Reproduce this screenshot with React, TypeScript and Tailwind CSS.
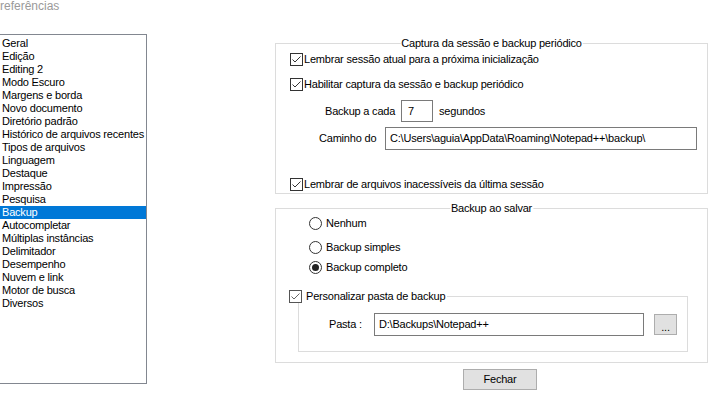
import type { ReactNode } from 'react'

const pages = [
  'Geral',
  'Edição',
  'Editing 2',
  'Modo Escuro',
  'Margens e borda',
  'Novo documento',
  'Diretório padrão',
  'Histórico de arquivos recentes',
  'Tipos de arquivos',
  'Linguagem',
  'Destaque',
  'Impressão',
  'Pesquisa',
  'Backup',
  'Autocompletar',
  'Múltiplas instâncias',
  'Delimitador',
  'Desempenho',
  'Nuvem e link',
  'Motor de busca',
  'Diversos',
]

function Check({ faded = false }: { faded?: boolean }) {
  return (
    <span
      className={`w-[13px] h-[13px] shrink-0 bg-white border flex items-center justify-center ${
        faded ? 'border-[#555]' : 'border-[#333]'
      }`}
    >
      <svg width="11" height="11" viewBox="0 0 11 11">
        <path d="M1.5 5.5 L4 8 L9.5 2.5" fill="none" stroke={faded ? '#666' : '#333'} strokeWidth="1" />
      </svg>
    </span>
  )
}

function Radio({ on = false }: { on?: boolean }) {
  return (
    <span className="w-[13px] h-[13px] shrink-0 rounded-full border border-[#333] bg-white flex items-center justify-center">
      {on && <span className="w-[7px] h-[7px] rounded-full bg-[#222]" />}
    </span>
  )
}

function Group({ title, className, children }: { title: string; className?: string; children: ReactNode }) {
  return (
    <div className={`relative border border-[#dcdcdc] flex flex-col ${className ?? ''}`}>
      <span className="absolute -top-[7px] left-1/2 -translate-x-1/2 bg-white px-[1px] leading-[13px] whitespace-nowrap">
        {title}
      </span>
      {children}
    </div>
  )
}

export default function App() {
  return (
    <div
      className="w-[709px] h-[397px] bg-white overflow-hidden flex text-[11px] text-black tracking-[-0.2px]"
      style={{ fontFamily: '"Liberation Sans", Arial, sans-serif' }}
    >
      {/* left: title + page list */}
      <div className="w-[147px] shrink-0 flex flex-col">
        <div className="h-[34px] text-[12px] text-[#9a9a9a] leading-[12px] tracking-normal">
          <span>referências</span>
        </div>
        <div className="h-[350px] border border-l-0 border-[#828790] pt-[2px]">
          {pages.map((p) => (
            <div
              key={p}
              className={`h-[13px] leading-[13px] pl-[2px] whitespace-nowrap ${
                p === 'Backup' ? 'bg-[#0078d7] text-white' : ''
              }`}
            >
              {p}
            </div>
          ))}
        </div>
      </div>

      {/* right: settings */}
      <div className="ml-[128px] w-[433px] shrink-0 pt-[43px] flex flex-col">
        <Group title="Captura da sessão e backup periódico" className="h-[151px] pt-[9px] pl-[14px]">
          <div className="h-[13px] flex items-center">
            <Check />
            <span className="ml-[1px] leading-[13px]">Lembrar sessão atual para a próxima inicialização</span>
          </div>
          <div className="h-[13px] mt-[12px] flex items-center">
            <Check />
            <span className="ml-[1px] leading-[13px]">Habilitar captura da sessão e backup periódico</span>
          </div>
          <div className="h-[22px] mt-[9px] pl-[35px] flex items-center">
            <span className="w-[76px]">Backup a cada</span>
            <span className="w-[32px] h-[22px] border border-[#7a7a7a] pl-[6px] flex items-center">7</span>
            <span className="ml-[6px]">segundos</span>
          </div>
          <div className="h-[23px] mt-[5px] pl-[29px] flex items-center">
            <span className="w-[66px]">Caminho do</span>
            <span className="w-[312px] h-[23px] border border-[#7a7a7a] pl-[4px] flex items-center whitespace-nowrap">
              C:\Users\aguia\AppData\Roaming\Notepad++\backup\
            </span>
          </div>
          <div className="h-[13px] mt-[28px] flex items-center">
            <Check />
            <span className="ml-[1px] leading-[13px]">Lembrar de arquivos inacessíveis da última sessão</span>
          </div>
        </Group>

        <Group title="Backup ao salvar" className="h-[155px] mt-[14px]">
          <div className="h-[13px] mt-[8px] ml-[33px] flex items-center">
            <Radio />
            <span className="ml-[4px] leading-[13px]">Nenhum</span>
          </div>
          <div className="h-[13px] mt-[11px] ml-[33px] flex items-center">
            <Radio />
            <span className="ml-[4px] leading-[13px]">Backup simples</span>
          </div>
          <div className="h-[13px] mt-[7px] ml-[33px] flex items-center">
            <Radio on />
            <span className="ml-[4px] leading-[13px]">Backup completo</span>
          </div>

          <div className="relative mt-[22px] ml-[22px] w-[390px] h-[56px] border border-[#dcdcdc]">
            <div className="absolute -left-[10px] -top-[7px] bg-white flex items-center pr-[2px]">
              <Check faded />
              <span className="ml-[4px] leading-[13px]">Personalizar pasta de backup</span>
            </div>
            <div className="mt-[16px] pl-[30px] flex items-center">
              <span className="w-[45px]">Pasta :</span>
              <span className="w-[270px] h-[23px] border border-[#7a7a7a] pl-[4px] flex items-center">
                D:\Backups\Notepad++
              </span>
              <button className="ml-[10px] w-[23px] h-[21px] bg-[#e1e1e1] border border-[#adadad] leading-[10px] pb-[2px] flex items-end justify-center">
                ...
              </button>
            </div>
          </div>
        </Group>

        <button className="mt-[6px] ml-[188px] w-[74px] h-[21px] bg-[#e1e1e1] border border-[#adadad] flex items-center justify-center">
          Fechar
        </button>
      </div>
    </div>
  )
}
